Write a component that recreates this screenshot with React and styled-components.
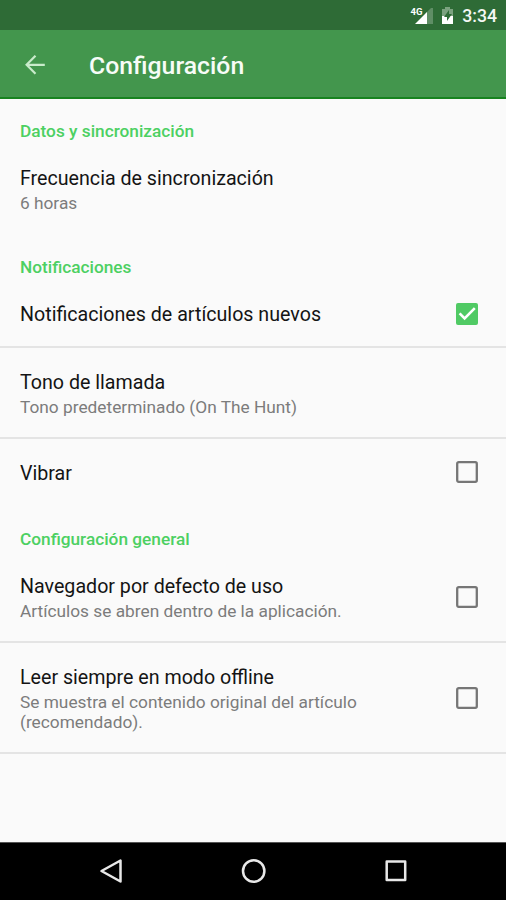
import React from "react";
import styled, { createGlobalStyle } from "styled-components";

const GlobalStyle = createGlobalStyle`
  * { box-sizing: border-box; }
  body { margin: 0; background: #fafafa; }
`;

const Screen = styled.div`
  display: flex;
  flex-direction: column;
  width: 506px;
  height: 900px;
  overflow: hidden;
  background: #fafafa;
  font-family: Roboto, "Noto Sans", sans-serif;
`;

const StatusBar = styled.div`
  flex: none;
  height: 30px;
  display: flex;
  align-items: center;
  justify-content: flex-end;
  padding-right: 9px;
  background: #2e6b36;
  color: #f4f8f4;
`;

const StatusIcons = styled.svg`
  display: block;
  margin-right: 7px;
`;

const NetworkLabel = styled.text`
  font: 700 9.5px Roboto, sans-serif;
  fill: #fff;
`;

const Clock = styled.span`
  font-size: 17.7px;
  font-weight: 500;
  line-height: 30px;
  padding-top: 2px;
`;

const AppBar = styled.header`
  flex: none;
  height: 69px;
  display: flex;
  align-items: center;
  padding: 2px 0 0 24px;
  background: #43964d;
  border-bottom: 2px solid #17831f;
`;

const AppTitle = styled.h1`
  margin: 0 0 0 43px;
  padding-top: 2px;
  font-size: 24.8px;
  font-weight: 500;
  line-height: 32px;
  color: #f7fcf7;
`;

const List = styled.main`
  flex: 1;
  min-height: 0;
`;

const Category = styled.h2`
  height: ${(p) => p.$height || 45}px;
  margin: 0;
  padding: 22px 20px 0;
  font-size: 17.25px;
  font-weight: 500;
  line-height: 20px;
  color: #4cd062;
`;

const Row = styled.div`
  height: ${(p) => p.$height}px;
  display: flex;
  align-items: center;
  justify-content: space-between;
  padding: 0 28px 0 20px;
  border-bottom: 2px solid ${(p) => (p.$divider ? "#e4e4e4" : "transparent")};
`;

const RowTitle = styled.div`
  margin-bottom: -1px;
  padding-top: ${(p) => (p.$lowered ? 3 : 1)}px;
  font-size: 19.65px;
  line-height: 26px;
  color: #141414;
`;

const Summary = styled.div`
  max-width: 350px;
  margin-bottom: -1px;
  padding-top: 2px;
  font-size: 17.3px;
  line-height: 20px;
  color: #7c7c7c;
`;

const Box = styled.svg`
  flex: none;
  display: block;
`;

const NavBar = styled.nav`
  flex: none;
  height: 58px;
  padding: 0 0 2px 1px;
  background: #000;
  border-top: 1px solid #555;
  display: flex;
  align-items: center;
  justify-content: center;
  gap: 117px;
`;

const NavIcon = styled.svg`
  display: block;
  fill: none;
  stroke: #e8e8e8;
  stroke-width: 2.5;
  stroke-linejoin: round;
`;

function Checkbox({ checked }) {
  return (
    <Box width="22" height="22" viewBox="0 0 22 22">
      {checked ? (
        <>
          <rect width="22" height="22" rx="2" fill="#50ca64" />
          <path d="M3.6 10.4l5 5L18.8 5.2" fill="none" stroke="#fff" strokeWidth="2.6" />
        </>
      ) : (
        <rect x="1.2" y="1.2" width="19.6" height="19.6" rx="1.5" fill="none" stroke="#767676" strokeWidth="2.3" />
      )}
    </Box>
  );
}

function Preference({ title, summary, height, divider, checked, lowered }) {
  return (
    <Row $height={height} $divider={divider}>
      <div>
        <RowTitle $lowered={lowered}>{title}</RowTitle>
        {summary && <Summary>{summary}</Summary>}
      </div>
      {checked !== undefined && <Checkbox checked={checked} />}
    </Row>
  );
}

export default function App() {
  return (
    <Screen>
      <GlobalStyle />
      <StatusBar>
        <StatusIcons width="45" height="30" viewBox="0 0 45 30">
          <path d="M23 8h-2L15 14V24h8z" fill="#5f8e65" />
          <path d="M5 24L17 12V24z" fill="#fff" />
          <NetworkLabel x="0.5" y="14.5" textLength="12" lengthAdjust="spacingAndGlyphs">4G</NetworkLabel>
          <path d="M32 9h3V7h5v2h3v7H32z" fill="#7ba27f" />
          <path d="M32 16h11v8H32z" fill="#fff" />
          <path d="M39 10l-5 7h3v4l5-7h-3z" fill="#2e6b36" />
        </StatusIcons>
        <Clock>3:34</Clock>
      </StatusBar>
      <AppBar>
        <svg width="22" height="22" viewBox="0 0 22 22" fill="none" stroke="#c9ebcb" strokeWidth="2.2">
          <path d="M11.5 1.8L2.6 10.8L11.5 19.8M2.6 10.8H20.8" />
        </svg>
        <AppTitle>Configuración</AppTitle>
      </AppBar>
      <List>
        <Category>Datos y sincronización</Category>
        <Preference title="Frecuencia de sincronización" summary="6 horas" height={91} />
        <Category $height={46}>Notificaciones</Category>
        <Preference title="Notificaciones de artículos nuevos" height={67} divider checked />
        <Preference title="Tono de llamada" summary="Tono predeterminado (On The Hunt)" height={91} divider />
        <Preference title="Vibrar" height={68} checked={false} lowered />
        <Category>Configuración general</Category>
        <Preference
          title="Navegador por defecto de uso"
          summary="Artículos se abren dentro de la aplicación."
          height={91}
          divider
          checked={false}
        />
        <Preference
          title="Leer siempre en modo offline"
          summary="Se muestra el contenido original del artículo (recomendado)."
          height={111}
          divider
          checked={false}
        />
      </List>
      <NavBar>
        <NavIcon width="26" height="26" viewBox="0 0 26 26">
          <path d="M22.5 2.5V23.5L3.5 13z" />
        </NavIcon>
        <NavIcon width="26" height="26" viewBox="0 0 26 26">
          <circle cx="12.7" cy="13" r="10.7" />
        </NavIcon>
        <NavIcon width="26" height="26" viewBox="0 0 26 26">
          <rect x="2.7" y="3.5" width="18.5" height="18.5" />
        </NavIcon>
      </NavBar>
    </Screen>
  );
}
